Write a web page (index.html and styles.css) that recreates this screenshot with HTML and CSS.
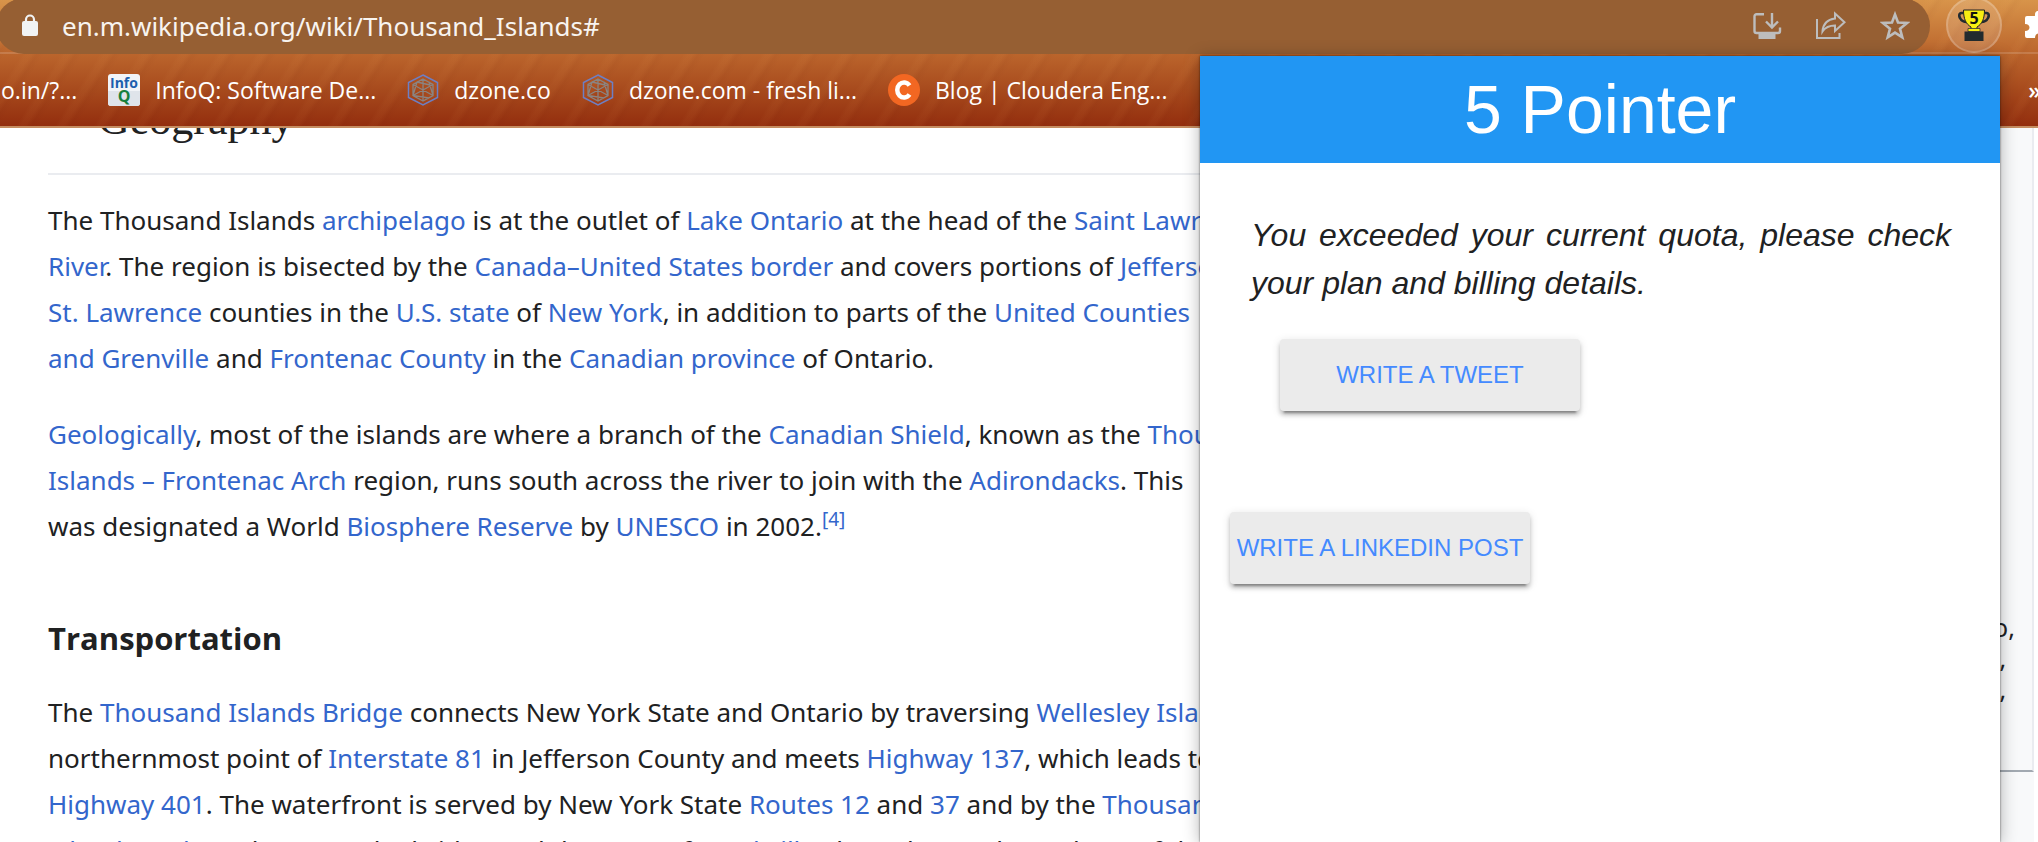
FILE: index.html
```html
<!DOCTYPE html>
<html lang="en">
<head>
<meta charset="utf-8">
<title>Thousand Islands</title>
<link rel="stylesheet" href="styles.css">
</head>
<body>
<header class="browser">
  <div class="toolbar">
    <div class="omnibox">
      <svg class="lock" width="16" height="26" viewBox="0 0 16 26" aria-hidden="true"><path d="M4 11V6.500a4 4 0 0 1 8 0V11" fill="none" stroke="#f1f3f4" stroke-width="2.200"/><rect x="0" y="8" width="16" height="15" rx="2" fill="#f1f3f4"/></svg>
      <input class="url" type="text" aria-label="Address" value="en.m.wikipedia.org/wiki/Thousand_Islands#">
      <button class="tool" aria-label="Install">
        <svg width="30" height="30" viewBox="0 0 30 30" fill="none" stroke="#bdbdbd" stroke-width="2.400"><path d="M12 3.200H4.500a2 2 0 0 0-2 2V20a2 2 0 0 0 2 2H26a2 2 0 0 0 2-2v-3.500M20 2v13M14 10.500l6 6 6-6"/><path d="M6.500 23h17v5h-17z" fill="#bdbdbd" stroke="none"/></svg>
      </button>
      <button class="tool" aria-label="Share">
        <svg width="30" height="30" viewBox="0 0 30 30" fill="none" stroke="#bdbdbd" stroke-width="2"><path d="M1 8v19h22.500v-5M19 2.500l9.500 8.800L19 20v-5.500c-6 0-9.500 1.500-12.500 6 .5-7.500 5-12 12.500-13z"/></svg>
      </button>
      <button class="tool" aria-label="Bookmark this page">
        <svg width="30" height="30" viewBox="0 0 30 30" fill="none" stroke="#bdbdbd" stroke-width="2.600"><path d="M15 3.500l3 8 9 .5-7 5.700 2.300 8.600-7.300-4.700-7.300 4.700L10 17.700 3 12l9-.5z"/></svg>
      </button>
    </div>
    <button class="extension" aria-label="5 Pointer">
      <svg width="32" height="32" viewBox="0 0 32 32"><path d="M7 4H3.500C1 4 .800 7 2 9c1.200 2.500 4 4 7 4M25 4h3.500c2.500 0 2.700 3 1.500 5-1.200 2.500-4 4-7 4" fill="none" stroke="#222b30" stroke-width="2.600"/><path d="M5.500 1h21c0 9-2.500 14-7.500 17v3.500h-6V18C8 15 5.500 10 5.500 1z" fill="#f8ee12" stroke="#222" stroke-width="1"/><path d="M10 19.500h12v3H10z" fill="#f8ee12" stroke="#333" stroke-width=".8"/><rect x="6.500" y="22.500" width="19" height="9.500" fill="#222b2e"/><text x="16" y="15" class="cup-number" text-anchor="middle">5</text></svg>
    </button>
    <button class="puzzle" aria-label="Extensions">
      <svg width="28" height="28" viewBox="0 0 28 28"><path d="M4 5h6c-1-7 8-7 7 0h7v7c6-1 6 8 0 7v8h-7c0-6-7-6-7 0H2a2 2 0 0 1-2-2v-5c6 0 6-7 0-7V7a2 2 0 0 1 2-2z" fill="#fff"/></svg>
    </button>
  </div>
  <nav class="bookmarks">
    <a class="bookmark" href="#">o.in/?...</a>
    <a class="bookmark" href="#"><svg width="32" height="32" viewBox="0 0 32 32"><rect width="32" height="32" rx="3" fill="#f2f4f7"/><path d="M0 17h32v12a3 3 0 0 1-3 3H3a3 3 0 0 1-3-3z" fill="#dfe4ea"/><text x="16" y="14" class="info-top" text-anchor="middle">Info</text><text x="16" y="28" class="info-q" text-anchor="middle">Q</text></svg>InfoQ: Software De...</a>
    <a class="bookmark" href="#"><svg width="32" height="32" viewBox="0 0 32 32"><use href="#dzone"/></svg>dzone.co</a>
    <a class="bookmark" href="#"><svg width="32" height="32" viewBox="0 0 32 32"><g id="dzone" fill="none"><path d="M16 1l14.500 7.500v15L16 31 1.500 23.500v-15z" stroke="#6d7fc4" stroke-width="1.500"/><path d="M16 5l10 5.500v11L16 27 6 21.500v-11zM16 5v22M6 10.500l20 11M26 10.500l-20 11M10 8l-4 13.500 16 2.500M22 8l4 13.500M10 8l13 3" stroke="#8a8482" stroke-width="1.300"/></g></svg>dzone.com - fresh li...</a>
    <a class="bookmark" href="#"><svg width="32" height="32" viewBox="0 0 32 32"><circle cx="16" cy="16" r="16" fill="#f26722"/><path d="M21.500 11.500a6.800 7.500 0 1 0 0 9" fill="none" stroke="#fff" stroke-width="4.500"/></svg>Blog | Cloudera Eng...</a>
    <button class="overflow" aria-label="More bookmarks">»</button>
  </nav>
</header>
<main class="page">
  <article class="article">
    <h2 class="section-title"><svg width="28" height="28" viewBox="0 0 28 28" aria-hidden="true"><path d="M3 20L14 9l11 11" fill="none" stroke="#54595d" stroke-width="2"/></svg>Geography</h2>
    <p>The Thousand Islands <a href="#">archipelago</a> is at the outlet of <a href="#">Lake Ontario</a> at the head of the <a href="#">Saint Lawrence<br>River</a>. The region is bisected by the <a href="#">Canada–United States border</a> and covers portions of <a href="#">Jefferson</a><br><a href="#">St. Lawrence</a> counties in the <a href="#">U.S. state</a> of <a href="#">New York</a>, in addition to parts of the <a href="#">United Counties<br>and Grenville</a> and <a href="#">Frontenac County</a> in the <a href="#">Canadian province</a> of Ontario.</p>
    <p><a href="#">Geologically</a>, most of the islands are where a branch of the <a href="#">Canadian Shield</a>, known as the <a href="#">Thousand<br>Islands – Frontenac Arch</a> region, runs south across the river to join with the <a href="#">Adirondacks</a>. This<br>was designated a World <a href="#">Biosphere Reserve</a> by <a href="#">UNESCO</a> in 2002.<sup><a href="#">[4]</a></sup></p>
    <h3 class="subtitle">Transportation</h3>
    <p>The <a href="#">Thousand Islands Bridge</a> connects New York State and Ontario by traversing <a href="#">Wellesley Island</a><br>northernmost point of <a href="#">Interstate 81</a> in Jefferson County and meets <a href="#">Highway 137</a>, which leads to<br><a href="#">Highway 401</a>. The waterfront is served by New York State <a href="#">Routes 12</a> and <a href="#">37</a> and by the <a href="#">Thousand</a><br><a href="#">Islands Parkway</a> between the bridge and the town of <a href="#">Brockville</a> along the northern shore of the river</p>
  </article>
  <aside class="infobox">
    <p class="caption">o,<br>&nbsp;,<br>&nbsp;,</p>
  </aside>
</main>
<section class="popup" aria-label="5 Pointer">
  <h1 class="popup-title">5 Pointer</h1>
  <div class="popup-body">
    <p class="message">You exceeded your current quota, please check your plan and billing details.</p>
    <button class="action tweet">Write a tweet</button>
    <button class="action linkedin">Write a LinkedIn post</button>
  </div>
</section>
</body>
</html>
```
FILE: styles.css
```css
* { box-sizing: border-box; }
body {
  margin: 0;
  height: 100vh;
  display: flex;
  flex-direction: column;
  overflow: hidden;
  position: relative;
  background: #fff;
  font-family: "Noto Sans", "Open Sans", sans-serif;
  color: #202122;
}
a { color: #3366cc; text-decoration: none; }
button { border: 0; padding: 0; background: none; font: inherit; color: inherit; }

.browser {
  flex: none;
  border-bottom: 2px solid #c58d61;
  background:
    repeating-linear-gradient(122deg, rgba(255, 190, 110, 0) 0 14px, rgba(255, 190, 110, .04) 18px 22px, rgba(80, 10, 0, .03) 27px, rgba(255, 190, 110, 0) 33px),
    linear-gradient(#d8944a 0, #bb652c 54px, #a74a1d 90px, #932e0e 126px);
  overflow: hidden;
}
.toolbar {
  display: flex;
  align-items: center;
  height: 56px;
  margin-top: -2px;
  gap: 16px;
  border-bottom: 2px solid rgba(255, 255, 255, .15);
}
.omnibox {
  flex: 1;
  display: flex;
  align-items: center;
  height: 56px;
  margin-bottom: -2px;
  margin-left: -4px;
  padding: 0 20px 0 26px;
  border-radius: 28px;
  background: #965f33;
}
.lock { flex: none; }
.url {
  flex: 1;
  min-width: 0;
  margin-left: 24px;
  padding: 0;
  border: 0;
  outline: 0;
  background: none;
  color: #f8f4f0;
  font: 26px/36px "Noto Sans", "Open Sans", sans-serif;
}
.tool { display: flex; margin-left: 34px; }
.extension {
  flex: none;
  display: flex;
  align-items: center;
  justify-content: center;
  width: 56px;
  height: 56px;
  border: 2px solid rgba(255, 255, 255, .2);
  border-radius: 50%;
  background: rgba(255, 255, 255, .14);
}
.cup-number { font: bold 16px "Open Sans", sans-serif; fill: #111; }
.puzzle { display: flex; margin: 0 -15px 0 7px; }
.bookmarks {
  display: flex;
  align-items: center;
  height: 72px;
  gap: 31px;
  padding-left: 1px;
  font-family: "Open Sans", sans-serif;
  font-size: 23px;
  line-height: 32px;
  white-space: nowrap;
}
.bookmark { display: flex; align-items: center; gap: 15px; color: #fff; }
.info-top { font: bold 14px "Open Sans", sans-serif; fill: #1c5fae; }
.info-q { font: bold 16px "Open Sans", sans-serif; fill: #17803d; }
.overflow { margin-left: auto; margin-right: -3px; color: #fff; font-weight: 600; }

.page { flex: 1; min-height: 0; display: flex; overflow: hidden; }
.article {
  flex: 1;
  min-width: 0;
  overflow: hidden;
  padding-left: 48px;
  font-size: 26px;
  line-height: 46px;
  white-space: nowrap;
}
.section-title {
  display: flex;
  align-items: center;
  gap: 22px;
  height: 86px;
  margin: -39px 0 22px;
  padding-bottom: 22px;
  border-bottom: 2px solid #eaecf0;
  font: 44px/64px "Liberation Serif", serif;
}
.article p { margin: 0 0 30px; }
.article .subtitle { margin: 66px 0 28px; font-family: "Open Sans", sans-serif; font-size: 31px; line-height: 46px; font-weight: 700; }
sup { font-size: 19px; line-height: 0; }
.infobox {
  flex: none;
  width: 45px;
  border-right: 2px solid #eaecf0;
  margin-right: 4px;
  height: 644px;
  border-bottom: 2px solid #a2a9b1;
  background: #f8f9fa;
  box-shadow: 0 80px #f8f9fa;
}
.caption { margin: 484px 0 0; padding-left: 4px; font-size: 25px; line-height: 31px; }

.popup {
  position: absolute;
  top: 56px;
  right: 38px;
  bottom: 0;
  width: 800px;
  background: #fff;
  box-shadow: 0 0 2px rgba(0, 0, 0, .6), 0 2px 16px rgba(0, 0, 0, .3);
  font-family: "Liberation Sans", Arial, sans-serif;
}
.popup-title {
  margin: 0;
  background: #2196f3;
  color: #fff;
  font-size: 68px;
  line-height: 107px;
  font-weight: 400;
  text-align: center;
}
.popup-body { display: flex; flex-direction: column; align-items: flex-start; padding: 48px 49px 0 30px; }
.message {
  margin: 0 0 32px 21px;
  font-size: 32px;
  line-height: 48px;
  font-style: italic;
  text-align: justify;
}
.action {
  width: 300px;
  height: 72px;
  border-radius: 4px;
  background: #ebebeb;
  color: #448aff;
  font-size: 24px;
  text-transform: uppercase;
  white-space: nowrap;
  box-shadow: 0 4px 4px rgba(0, 0, 0, .2), 0 6px 2px -4px rgba(0, 0, 0, .3), 0 2px 10px rgba(0, 0, 0, .12);
}
.tweet { margin: 0 0 101px 50px; }
```
